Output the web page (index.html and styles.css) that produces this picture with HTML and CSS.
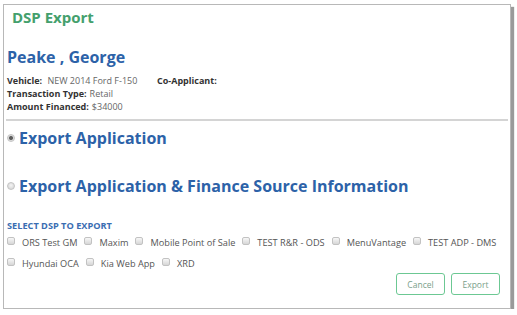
FILE: index.html
```html
<!DOCTYPE html>
<html>
<head>
<meta charset="utf-8">
<link rel="stylesheet" href="styles.css">
</head>
<body>
<div class="dialog">
  <h1 class="title">DSP Export</h1>
  <h2 class="name">Peake , George</h2>
  <div class="info">
    <div class="info-line">
      <span class="vehicle"><b>Vehicle:</b> <span class="val">NEW 2014 Ford F-150</span></span>
      <span class="co"><b>Co-Applicant:</b></span>
    </div>
    <div class="info-line"><b>Transaction Type:</b> <span class="val">Retail</span></div>
    <div class="info-line"><b>Amount Financed:</b> <span class="val">$34000</span></div>
  </div>
  <hr class="divider">
  <div class="option first"><span class="radio checked"></span>Export Application</div>
  <div class="option second"><span class="radio"></span>Export Application &amp; Finance Source Information</div>
  <div class="select-label">SELECT DSP TO EXPORT</div>
  <div class="dsp-list">
    <span class="dsp"><span class="cb"></span>ORS Test GM</span>
    <span class="dsp"><span class="cb"></span>Maxim</span>
    <span class="dsp"><span class="cb"></span>Mobile Point of Sale</span>
    <span class="dsp"><span class="cb"></span>TEST R&amp;R - ODS</span>
    <span class="dsp"><span class="cb"></span>MenuVantage</span>
    <span class="dsp"><span class="cb"></span>TEST ADP - DMS</span>
    <span class="dsp"><span class="cb"></span>Hyundai OCA</span>
    <span class="dsp"><span class="cb"></span>Kia Web App</span>
    <span class="dsp"><span class="cb"></span>XRD</span>
  </div>
  <div class="actions">
    <button class="btn">Cancel</button>
    <button class="btn">Export</button>
  </div>
</div>
</body>
</html>
```

FILE: styles.css
```css
html, body {
  margin: 0;
  padding: 0;
  background: #fff;
}
body {
  font-family: "Open Sans", "Noto Sans", sans-serif;
  color: #333;
}
.dialog {
  box-sizing: border-box;
  margin: 4px 0 0 3px;
  width: 508px;
  height: 305px;
  border: 1px solid #b8b8b8;
  box-shadow: 3px 3px 1px #9a9a9a;
  padding: 0 2px 0 3px;
  background: #fff;
}
.title {
  margin: 0;
  padding: 2px 0 0 5px;
  font-size: 15px;
  line-height: 20px;
  font-weight: 700;
  color: #44a06d;
}
.name {
  margin: 19px 0 0 0;
  font-size: 16px;
  line-height: 22px;
  font-weight: 700;
  color: #2c62a8;
}
.info {
  margin-top: 6px;
  font-size: 9px;
  line-height: 13px;
}
.info-line {
  display: flex;
}
.info-line b {
  font-weight: 700;
  color: #333;
  margin-right: 3px;
}
.val {
  color: #666;
}
.vehicle {
  width: 150px;
}
.divider {
  margin: 6px 0 0 -1px;
  height: 2px;
  border: 0;
  background: #d4d4d4;
}
.option {
  font-size: 16px;
  line-height: 22px;
  font-weight: 700;
  color: #2c62a8;
}
.option.first {
  margin-top: 6px;
}
.option.second {
  margin-top: 26px;
}
.radio {
  display: inline-block;
  box-sizing: border-box;
  width: 8px;
  height: 8px;
  border-radius: 50%;
  border: 1px solid #c4c4c4;
  background: radial-gradient(circle at 50% 40%, #f4f4f4, #cfcfcf);
  vertical-align: 2px;
  margin-right: 4px;
}
.radio.checked {
  background: radial-gradient(circle, #555 0, #666 1.6px, #d8d8d8 2.4px, #eee 4px);
}
.select-label {
  margin-top: 23px;
  font-size: 9.2px;
  line-height: 12px;
  font-weight: 700;
  color: #3a6db2;
}
.dsp-list {
  display: flex;
  flex-wrap: wrap;
  column-gap: 7px;
  font-size: 9.2px;
  line-height: 21px;
  color: #555;
}
.dsp {
  white-space: nowrap;
}
.cb {
  display: inline-block;
  box-sizing: border-box;
  width: 8px;
  height: 8px;
  border: 1px solid #c2c2c2;
  border-radius: 2px;
  background: linear-gradient(#f7f7f7, #d6d6d6);
  vertical-align: 1px;
  margin-right: 7px;
}
.actions {
  display: flex;
  justify-content: flex-end;
  gap: 6px;
  padding-right: 8px;
  margin-top: -1px;
}
.btn {
  box-sizing: border-box;
  width: 49px;
  height: 22px;
  padding: 0;
  background: #fff;
  border: 1px solid #6cc893;
  border-radius: 3px;
  font-family: "Open Sans", "Noto Sans", sans-serif;
  font-size: 8.5px;
  color: #7aa08a;
}
```
